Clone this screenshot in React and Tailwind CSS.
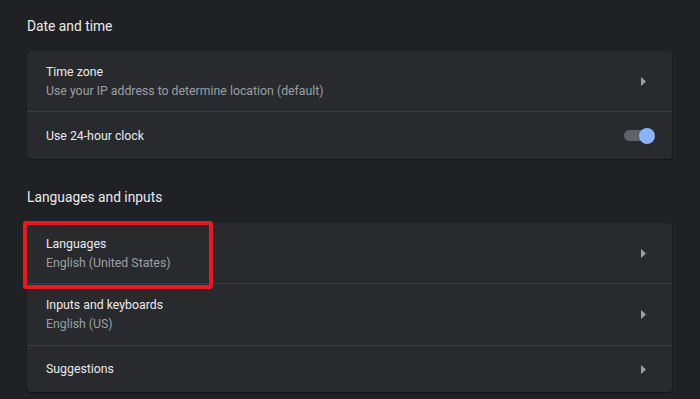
function Arrow() {
  return (
    <div className="w-6 h-6 flex items-center justify-center">
      <svg width="5" height="9" viewBox="0 0 5 9">
        <path d="M0 0 L5 4.5 L0 9 Z" fill="#9aa0a6" />
      </svg>
    </div>
  )
}

function Toggle() {
  return (
    <div className="relative w-[31px] h-4 flex items-center">
      <div className="w-[26px] h-[11px] rounded-full bg-[#5f6368]" />
      <div className="absolute right-0 top-0 w-4 h-4 rounded-full bg-[#8ab4f8] shadow" />
    </div>
  )
}

function Row({ title, subtitle, right, height, last }) {
  return (
    <div
      className={`flex items-center justify-between pl-[19px] pr-[17px] ${height} ${
        last ? '' : 'border-b border-[#3c3d40]'
      }`}
    >
      <div>
        <div className="text-[12.3px] leading-[20px] text-[#e8eaed]">{title}</div>
        {subtitle && <div className="text-[12.3px] leading-[19px] text-[#9aa0a6]">{subtitle}</div>}
      </div>
      {right}
    </div>
  )
}

export default function App() {
  return (
    <div
      className="w-[700px] h-[399px] overflow-hidden bg-[#202124] pl-[27px] pr-[28px] pt-4"
      style={{ fontFamily: 'Roboto, "Liberation Sans", sans-serif' }}
    >
      {/* Date and time */}
      <h2 className="text-[13.8px] leading-5 text-[#e8eaed] mb-[15px]">Date and time</h2>
      <div className="rounded bg-[#292a2d] shadow-[0_1px_2px_rgba(0,0,0,0.4)]">
        <Row
          title="Time zone"
          subtitle="Use your IP address to determine location (default)"
          right={<Arrow />}
          height="h-[61px]"
        />
        <Row title="Use 24-hour clock" right={<Toggle />} height="h-[47px]" last />
      </div>

      {/* Languages and inputs */}
      <h2 className="text-[13.8px] leading-5 text-[#e8eaed] mt-7 mb-4">Languages and inputs</h2>
      <div className="relative rounded bg-[#292a2d] shadow-[0_1px_2px_rgba(0,0,0,0.4)]">
        <Row
          title="Languages"
          subtitle="English (United States)"
          right={<Arrow />}
          height="h-[61px]"
        />
        <Row
          title="Inputs and keyboards"
          subtitle="English (US)"
          right={<Arrow />}
          height="h-[62px]"
        />
        <Row title="Suggestions" right={<Arrow />} height="h-[46px]" last />
        <div className="absolute left-[-4px] top-[-2px] w-[190px] h-[68px] border-4 border-[#e8191f] rounded-[3px]" />
      </div>
    </div>
  )
}
